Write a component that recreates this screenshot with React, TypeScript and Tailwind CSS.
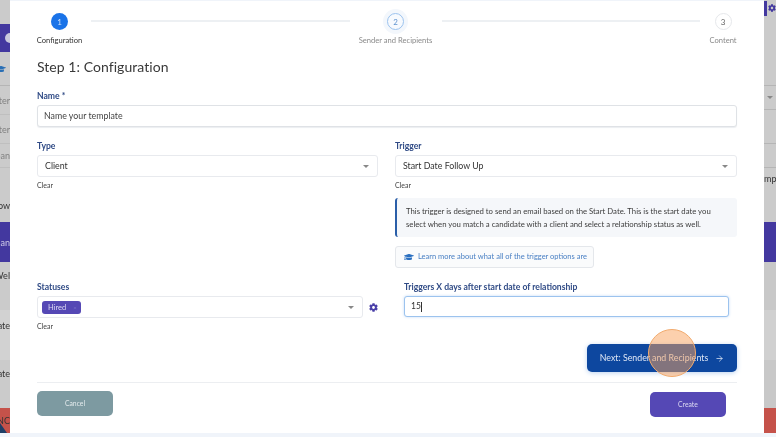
import { ArrowRight } from "lucide-react";
import { FaCog, FaGraduationCap } from "react-icons/fa";

function Caret() {
  return <span className="h-0 w-0 border-x-[3px] border-t-[3px] border-x-transparent border-t-[#888]" />;
}

function Label({ children, className = "" }: { children: React.ReactNode; className?: string }) {
  return <div className={`text-[8.6px] leading-[12px] font-bold text-[#2f4a85] ${className}`}>{children}</div>;
}

function Clear() {
  return <div className="mt-[4px] text-[7px] leading-[8px] text-[#444]">Clear</div>;
}

function Select({ children, className = "" }: { children: React.ReactNode; className?: string }) {
  return (
    <div className={`flex h-[22px] items-center justify-between rounded-[3px] border border-[#e8eaee] bg-white pr-[8px] pl-[7px] text-[8.8px] text-[#333] ${className}`}>
      {children}
      <Caret />
    </div>
  );
}

function SideRow({ className = "", text, align = "right" }: { className?: string; text?: string; align?: "left" | "right" }) {
  return (
    <div className={`flex shrink-0 overflow-hidden ${align === "right" ? "justify-end" : "justify-start"} ${className}`}>
      {text ? <span className="text-[9px] leading-none whitespace-nowrap text-[#333]">{text}</span> : null}
    </div>
  );
}

export default function App() {
  return (
    <div className="flex h-[437px] w-[776px] overflow-hidden bg-[#f0f4fa] blur-[0.4px] [font-family:Lato,'Noto_Sans',sans-serif]">
      <div className="flex h-[433px] w-[10px] shrink-0 flex-col overflow-hidden bg-[#cbcbcb]">
        <div className="h-[24px] shrink-0" />
        <div className="flex h-[28px] shrink-0 items-center justify-end bg-[#43389f]">
          <span className="mr-[-5px] h-[10px] w-[10px] shrink-0 rounded-full bg-[#c9c9dd]" />
        </div>
        <div className="flex h-[34px] shrink-0 items-center justify-start overflow-hidden border-b border-[#b5b5b5]">
          <FaGraduationCap className="ml-[-4px] h-[10px] w-[10px] shrink-0 text-[#2a6fb5]" />
        </div>
        <SideRow className="h-[29px] items-center border-b border-[#b5b5b5] opacity-50" text="ter" />
        <SideRow className="h-[29px] items-center border-b border-[#b5b5b5] opacity-50" text="ter" />
        <SideRow className="h-[24px] items-center border-b border-[#b5b5b5] opacity-50" text="ean" />
        <SideRow className="h-[54px] items-start pt-[33px]" text="ow" />
        <SideRow className="h-[40px] items-center bg-[#43389f] [&>span]:text-[#cfcbe8]" text="lan" />
        <SideRow className="h-[48px] items-start pt-[9px]" text="Wel" />
        <SideRow className="h-[50px] items-start bg-[#d2d2d2] pt-[11px]" text="ate" />
        <SideRow className="h-[48px] items-start pt-[9px]" text="ate" />
        <div className="relative flex h-[25px] shrink-0 items-center justify-end overflow-hidden bg-[#c5524a]">
          <span className="text-[9px] leading-none whitespace-nowrap text-[#333]">NC</span>
          <svg className="absolute bottom-0 left-0 h-[10px] w-[10px]" viewBox="0 0 10 10">
            <path d="M0 0 L7 10 L0 10 Z" fill="#1f3f66" />
          </svg>
        </div>
      </div>

      <div className="mt-[1px] flex h-[432px] flex-1 flex-col bg-white px-[27px] pt-[12px]">
        <div className="flex gap-[9px]">
          <div className="flex w-[45px] shrink-0 flex-col items-center">
            <div className="flex h-[17px] w-[17px] items-center justify-center rounded-full bg-[#1a73e8] text-[8px] text-[#cfe2fb]">1</div>
            <div className="mt-[5px] text-[7.6px] leading-[10px] whitespace-nowrap text-[#333]">Configuration</div>
          </div>
          <div className="mt-[7px] h-[2px] flex-1 bg-[#edf0f3]" />
          <div className="flex w-[74px] shrink-0 flex-col items-center">
            <div className="flex h-[17px] w-[17px] items-center justify-center rounded-full border border-[#9cc3ee] bg-[#f7fafe] text-[8px] text-[#5f93cf] shadow-[0_0_0_4px_#f3f7fc]">2</div>
            <div className="mt-[5px] text-[7.6px] leading-[10px] whitespace-nowrap text-[#8a8a8a]">Sender and Recipients</div>
          </div>
          <div className="mt-[7px] h-[2px] flex-1 bg-[#edf0f3]" />
          <div className="flex w-[28px] shrink-0 flex-col items-center">
            <div className="flex h-[17px] w-[17px] items-center justify-center rounded-full border border-[#e6e8eb] bg-white text-[8px] text-[#666]">3</div>
            <div className="mt-[5px] text-[7.6px] leading-[10px] whitespace-nowrap text-[#8a8a8a]">Content</div>
          </div>
        </div>

        <h1 className="mt-[13px] text-[14px] leading-[18px] font-normal tracking-[0.05px] text-[#3a3a3a]">Step 1: Configuration</h1>

        <Label className="mt-[14px]">Name *</Label>
        <div className="mt-[3px] flex h-[22px] items-center rounded-[3px] border border-[#dfe2e6] bg-white px-[6px] text-[8.8px] text-[#444] shadow-[0_1px_1px_#eceef1]">Name your template</div>

        <div className="mt-[13px] grid grid-cols-[341px_342px] gap-x-[17px]">
          <div>
            <Label>Type</Label>
            <Select className="mt-[3px]">Client</Select>
            <Clear />
          </div>
          <div>
            <Label>Trigger</Label>
            <Select className="mt-[3px]">Start Date Follow Up</Select>
            <Clear />
            <div className="mt-[9px] h-[39px] rounded-[3px] border-l-[2px] border-[#2a5ea8] bg-[#f5f7fa] px-[9px] py-[7px] text-[7.75px] leading-[13px] text-[#3c3c3c]">
              <div className="whitespace-nowrap">This trigger is designed to send an email based on the Start Date. This is the start date you</div>
              <div className="whitespace-nowrap">select when you match a candidate with a client and select a relationship status as well.</div>
            </div>
            <div className="mt-[9px] flex h-[22px] w-[199px] items-center gap-[4px] rounded-[3px] border border-[#e4e7eb] bg-[#fafbfc] pl-[8px] text-[7.5px] whitespace-nowrap text-[#4a80c4]">
              <FaGraduationCap className="h-[10px] w-[10px] shrink-0 text-[#2a6fc0]" />
              Learn more about what all of the trigger options are
            </div>
          </div>
          <div className="mt-[13px]">
            <Label>Statuses</Label>
            <div className="mt-[3px] flex items-center gap-[3px]">
              <div className="flex h-[22px] w-[329px] items-center justify-between rounded-[3px] border border-[#e8eaee] bg-white pr-[8px] pl-[4px]">
                <div className="flex h-[13px] w-[39px] items-center gap-[7px] rounded-[3px] bg-[#5548b5] pl-[6px] text-[7.5px] leading-[13px] text-[#dcd9f2]">
                  Hired
                  <span className="text-[6px] text-[#7a70c8]">×</span>
                </div>
                <Caret />
              </div>
              <FaCog className="ml-[3px] h-[9px] w-[9px] shrink-0 text-[#4a40a8]" />
            </div>
            <Clear />
          </div>
          <div className="mt-[13px] pr-[8px] pl-[9px]">
            <Label>Triggers X days after start date of relationship</Label>
            <div className="mt-[3px] flex h-[21px] items-center rounded-[3px] border border-[#9cc3ee] bg-white px-[6px] text-[8.5px] text-[#333] shadow-[0_0_3px_#c4dbf5]">
              15<span className="ml-[0.5px] h-[10px] w-px bg-[#333]" />
            </div>
          </div>
        </div>

        <div className="mt-[14px] flex justify-end">
          <div className="relative flex h-[28px] w-[150px] items-center justify-center gap-[7px] rounded-[5px] bg-[#0d479f] text-[8.8px] whitespace-nowrap text-[#dfe7f5] shadow-[0_1px_5px_#bcd3f0]">
            Next: Sender and Recipients
            <ArrowRight size={9} strokeWidth={2} />
            <span className="absolute top-[-15px] left-[61px] h-[48px] w-[48px] rounded-full border-[1.5px] border-[#f2ab6e] bg-[#f9a25c]/50" />
          </div>
        </div>

        <div className="mt-[10px] h-px shrink-0 bg-[#eceef1]" />

        <div className="mt-[8px] flex items-start justify-between pr-[11px]">
          <div className="flex h-[25px] w-[76px] items-center justify-center rounded-[5px] bg-[#7d9aa1] text-[6.8px] text-[#e3eaec]">Cancel</div>
          <div className="mt-[1px] flex h-[25px] w-[76px] items-center justify-center rounded-[5px] bg-[#5548b5] text-[6.8px] text-[#dcd9f2]">Create</div>
        </div>
      </div>

      <div className="flex h-[433px] w-[12px] shrink-0 flex-col overflow-hidden bg-[#cbcbcb]">
        <div className="flex h-[16px] shrink-0 items-center gap-[1px]">
          <span className="h-[15px] w-[3px] shrink-0 bg-[#43389f]" />
          <FaCog className="h-[8px] w-[8px] shrink-0 text-[#43389f]" />
        </div>
        <div className="h-[70px] shrink-0 border-b border-[#b5b5b5]" />
        <div className="flex h-[24px] shrink-0 items-center justify-center border-b border-[#b5b5b5]">
          <Caret />
        </div>
        <div className="h-[34px] shrink-0 border-b border-[#b5b5b5]" />
        <div className="h-[24px] shrink-0 border-b border-[#b5b5b5]" />
        <SideRow align="left" className="h-[20px] items-center" text="mpl" />
        <div className="h-[34px] shrink-0" />
        <div className="h-[40px] shrink-0 bg-[#43389f]" />
        <div className="h-[48px] shrink-0 bg-[#c8c8c8]" />
        <div className="h-[50px] shrink-0 bg-[#d0d0d0]" />
        <div className="h-[48px] shrink-0 bg-[#c8c8c8]" />
        <div className="h-[25px] shrink-0 bg-[#c5524a]" />
      </div>
    </div>
  );
}
